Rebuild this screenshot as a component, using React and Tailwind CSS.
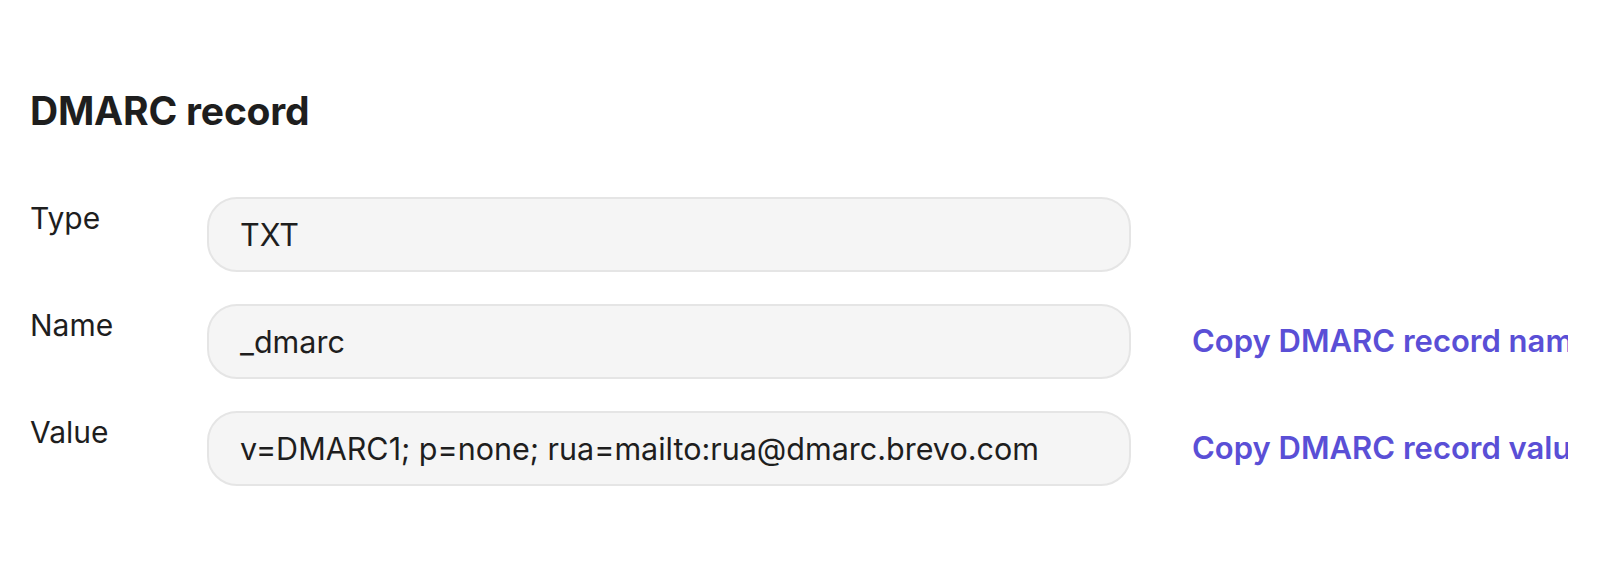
import React from 'react';

const rows = [
  { label: 'Type', value: 'TXT' },
  { label: 'Name', value: '_dmarc', copy: 'Copy DMARC record name' },
  { label: 'Value', value: 'v=DMARC1; p=none; rua=mailto:rua@dmarc.brevo.com', copy: 'Copy DMARC record value' },
];

const App = () => {
  return (
    <div className="min-h-[567px] w-[1600px] bg-white pl-[30px] pt-[87px] text-[#1e1e1e] font-['Inter','Liberation_Sans',sans-serif] overflow-hidden">
      <h1 className="text-[39px] leading-[48px] font-bold tracking-[-0.2px]">DMARC record</h1>

      <div className="mt-[62px] flex flex-col gap-[32px]">
        {rows.map((row) => (
          <div key={row.label} className="flex items-start">
            <div className="w-[177px] shrink-0 pt-[1px] text-[30px] leading-[40px]">{row.label}</div>
            <div className="w-[924px] h-[75px] shrink-0 flex items-center rounded-[30px] border-2 border-[#e5e5e5] bg-[#f5f5f5] pl-[31px] text-[30.5px]">
              {row.value}
            </div>
            {row.copy && (
              <div className="ml-[61px] w-[376px] h-[75px] flex items-center overflow-hidden whitespace-nowrap">
                <button className="text-[31px] font-semibold text-[#5a4fd6] cursor-pointer">{row.copy}</button>
              </div>
            )}
          </div>
        ))}
      </div>
    </div>
  );
};

export default App;
